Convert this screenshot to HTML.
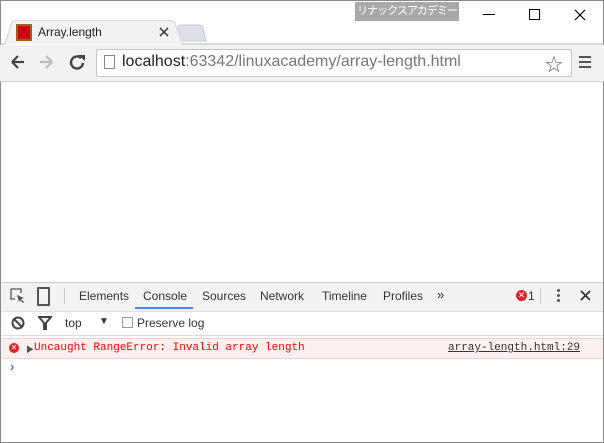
<!DOCTYPE html><html><head><style>
body{margin:0;width:604px;height:443px;overflow:hidden;font-family:"Liberation Sans","Noto Sans CJK JP",sans-serif;background:#fff;position:relative}
.a{position:absolute}
.mono{font-family:"Liberation Mono",monospace}
</style></head><body>
<div class="a" style="left:0;top:0;width:602px;height:441px;border:1px solid #8a8a8a"></div>
<div class="a" style="left:355px;top:2px;width:104px;height:19px;background:#a9a9a9;color:#fff;font-size:11px;line-height:19px;text-align:center;letter-spacing:-1px">リナックスアカデミー</div>
<div class="a" style="left:483px;top:14px;width:12px;height:1px;background:#000"></div>
<div class="a" style="left:529px;top:9px;width:9px;height:9px;border:1px solid #000"></div>
<svg class="a" style="left:574px;top:9px" width="12" height="12"><path d="M1 1L11 11M11 1L1 11" stroke="#000" stroke-width="1.2"/></svg>
<!-- tab -->
<svg class="a" style="left:0;top:20px" width="604" height="26"><path d="M0 24 L5 24 L12 3 Q13 1 16 1 L170 1 Q174 1 175 4 L182 24 L604 24" fill="none" stroke="#b0b0b0"/><path d="M5 24 L12 3 Q13 1 16 1 L170 1 Q174 1 175 4 L182 24Z" fill="#f2f2f2"/><path d="M178 8 Q178 5 181 5 L199 5 Q202 5 203 8 L206 21 L183 21Z" fill="#dde1e6" stroke="#c7cbd0"/></svg>
<div class="a" style="left:0;top:45px;width:604px;height:36px;background:#f2f2f2;border-bottom:1px solid #d0d0d0"></div>
<div class="a" style="left:16px;top:24px;width:12px;height:13px;background:#d00018;border:2px solid #a06018"></div>
<div class="a" style="left:38px;top:25px;font-size:12px;color:#222">Array.length</div>
<svg class="a" style="left:159px;top:27px" width="10" height="10"><path d="M1 1L9 9M9 1L1 9" stroke="#444" stroke-width="1.6"/></svg>
<svg class="a" style="left:10px;top:54px" width="80" height="16"><path d="M2 8H14M2 8L8 2M2 8L8 14" stroke="#444" stroke-width="2.2" fill="none"/><path d="M30 8H42M42 8L36 2M42 8L36 14" stroke="#bbb" stroke-width="2.2" fill="none"/><path d="M71 4A6 6 0 1 0 73 9" stroke="#444" stroke-width="2.4" fill="none"/><path d="M68 1L75 1L75 7Z" fill="#444"/></svg>
<div class="a" style="left:96px;top:49px;width:474px;height:26px;background:#fff;border:1px solid #c5c5c5;border-radius:2px"></div>
<div class="a" style="left:104px;top:55px;width:9px;height:12px;border:1px solid #888"></div>
<div class="a" style="left:122px;top:53px;font-size:16px;color:#777"><span style="color:#222">localhost</span>:63342/linuxacademy/array-length.html</div>
<div class="a" style="left:545px;top:51px;font-size:18px;color:#666">☆</div>
<div class="a" style="left:579px;top:56px;width:12px;height:2px;background:#555;box-shadow:0 5px 0 #555,0 10px 0 #555"></div>
<!-- devtools -->
<div class="a" style="left:1px;top:282px;width:602px;height:28px;background:#f3f3f3;border-top:1px solid #ccc;border-bottom:1px solid #ddd"></div>
<svg class="a" style="left:10px;top:288px" width="16" height="16"><path d="M1 1H11V5M1 1V11H5" stroke="#555" fill="none" stroke-width="1.3"/><path d="M7 7L14 10L11 11L14 14L13 15L10 12L9 14Z" fill="#555"/></svg>
<div class="a" style="left:37px;top:287px;width:9px;height:15px;border:2px solid #555;border-radius:1px"></div>
<div class="a" style="left:64px;top:288px;width:1px;height:16px;background:#ccc"></div>
<div class="a" style="left:79px;top:289px;font-size:12px;color:#333">Elements</div>
<div class="a" style="left:143px;top:289px;font-size:12px;color:#333">Console</div>
<div class="a" style="left:135px;top:307px;width:58px;height:2px;background:#4a8af4"></div>
<div class="a" style="left:202px;top:289px;font-size:12px;color:#333">Sources</div>
<div class="a" style="left:260px;top:289px;font-size:12px;color:#333">Network</div>
<div class="a" style="left:322px;top:289px;font-size:12px;color:#333">Timeline</div>
<div class="a" style="left:383px;top:289px;font-size:12px;color:#333">Profiles</div>
<div class="a" style="left:437px;top:287px;font-size:13px;color:#333">»</div>
<div class="a" style="left:516px;top:290px;width:11px;height:11px;border-radius:50%;background:#e0202a;color:#fff;font-size:9px;line-height:11px;text-align:center">✕</div>
<div class="a" style="left:528px;top:289px;font-size:12px;color:#333">1</div>
<div class="a" style="left:540px;top:288px;width:1px;height:16px;background:#ccc"></div>
<div class="a" style="left:557px;top:289px;width:3px;height:3px;background:#555;border-radius:50%;box-shadow:0 5px 0 #555,0 10px 0 #555"></div>
<svg class="a" style="left:580px;top:290px" width="11" height="11"><path d="M1 1L10 10M10 1L1 10" stroke="#333" stroke-width="1.8"/></svg>
<svg class="a" style="left:11px;top:316px" width="14" height="14"><circle cx="7" cy="7" r="5.5" stroke="#444" stroke-width="2" fill="none"/><path d="M3 3L11 11" stroke="#444" stroke-width="2"/></svg>
<svg class="a" style="left:38px;top:316px" width="14" height="14"><path d="M1 1H13L8 7V13H6V7Z" fill="none" stroke="#444" stroke-width="2"/></svg>
<div class="a" style="left:65px;top:316px;font-size:12px;color:#333">top</div>
<div class="a" style="left:99px;top:316px;font-size:10px;color:#333">▼</div>
<div class="a" style="left:122px;top:317px;width:9px;height:9px;border:1px solid #999;background:#f8f8f8"></div>
<div class="a" style="left:137px;top:316px;font-size:12px;color:#333">Preserve log</div>
<div class="a" style="left:1px;top:335px;width:602px;height:1px;background:#ddd"></div>
<div class="a" style="left:1px;top:338px;width:602px;height:19px;background:#fff0f0;border-top:1px solid #f5d0d0;border-bottom:1px solid #f5d0d0"></div>
<div class="a" style="left:9px;top:343px;width:10px;height:10px;border-radius:50%;background:#e0202a;color:#fff;font-size:8px;line-height:10px;text-align:center">✕</div>
<div class="a" style="left:26px;top:344px;font-size:8px;color:#555">▶</div>
<div class="a mono" style="left:34px;top:342px;font-size:11px;color:#f00">Uncaught RangeError: Invalid array length</div>
<div class="a mono" style="left:448px;top:342px;font-size:11px;color:#333;text-decoration:underline">array-length.html:29</div>
<div class="a" style="left:10px;top:359px;font-size:13px;color:#367cf1;font-weight:bold">›</div>
</body></html>
